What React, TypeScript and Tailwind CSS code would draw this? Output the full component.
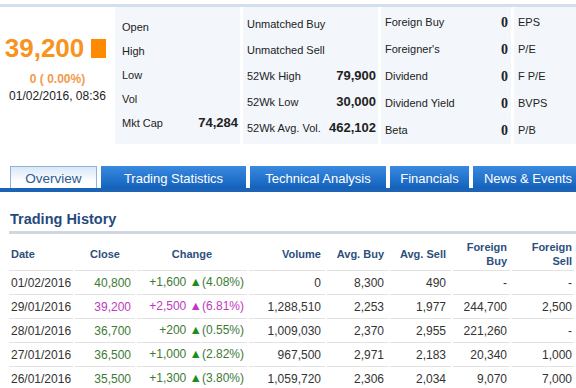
import React from 'react';

type Cell = { label: string; value?: string };

const col1: Cell[] = [
  { label: 'Open' },
  { label: 'High' },
  { label: 'Low' },
  { label: 'Vol' },
  { label: 'Mkt Cap', value: '74,284' },
];

const col2: Cell[] = [
  { label: 'Unmatched Buy' },
  { label: 'Unmatched Sell' },
  { label: '52Wk High', value: '79,900' },
  { label: '52Wk Low', value: '30,000' },
  { label: '52Wk Avg. Vol.', value: '462,102' },
];

const col3: Cell[] = [
  { label: 'Foreign Buy', value: '0' },
  { label: "Foreigner's", value: '0' },
  { label: 'Dividend', value: '0' },
  { label: 'Dividend Yield', value: '0' },
  { label: 'Beta', value: '0' },
];

const col4 = ['EPS', 'P/E', 'F P/E', 'BVPS', 'P/B'];

type Row = {
  date: string;
  close: string;
  change: string;
  pct: string;
  volume: string;
  avgBuy: string;
  avgSell: string;
  fBuy: string;
  fSell: string;
  hot?: boolean;
};

const rows: Row[] = [
  { date: '01/02/2016', close: '40,800', change: '+1,600', pct: '(4.08%)', volume: '0', avgBuy: '8,300', avgSell: '490', fBuy: '-', fSell: '-' },
  { date: '29/01/2016', close: '39,200', change: '+2,500', pct: '(6.81%)', volume: '1,288,510', avgBuy: '2,253', avgSell: '1,977', fBuy: '244,700', fSell: '2,500', hot: true },
  { date: '28/01/2016', close: '36,700', change: '+200', pct: '(0.55%)', volume: '1,009,030', avgBuy: '2,370', avgSell: '2,955', fBuy: '221,260', fSell: '-' },
  { date: '27/01/2016', close: '36,500', change: '+1,000', pct: '(2.82%)', volume: '967,500', avgBuy: '2,971', avgSell: '2,183', fBuy: '20,340', fSell: '1,000' },
  { date: '26/01/2016', close: '35,500', change: '+1,300', pct: '(3.80%)', volume: '1,059,720', avgBuy: '2,306', avgSell: '2,034', fBuy: '9,070', fSell: '7,000' },
];

const tabs = [
  { name: 'Trading Statistics', w: 'w-[145px]' },
  { name: 'Technical Analysis', w: 'w-[136px]' },
  { name: 'Financials', w: 'w-[79px]' },
  { name: 'News & Events', w: 'w-[110px]' },
];

export default function App() {
  return (
    <div className="w-[576px] h-[388px] overflow-hidden bg-white font-['Liberation_Sans',Arial,sans-serif] text-[#222]">
      <div className="mt-[4px] h-[3px] bg-[#d3dfeb]" />

      {/* quote summary */}
      <div className="flex h-[137px]">
        <div className="w-[115px] flex flex-col items-center">
          <div className="mt-[28px] flex items-center gap-[7px] pr-[4px]">
            <span className="text-[26px] font-bold leading-[26px] text-[#f7931e]">39,200</span>
            <span className="w-[15px] h-[19px] bg-[#ff8a00]" />
          </div>
          <div className="mt-[11px] text-[12px] font-bold leading-[14px] text-[#f39a4a]">0 ( 0.00%)</div>
          <div className="mt-[3px] text-[12px] leading-[14px] text-[#222]">01/02/2016, 08:36</div>
        </div>

        <div className="flex-1 flex gap-[3px]">
          <div className="w-[125px] bg-[#f3f7fb] pt-[8px] pl-[7px] pr-[2px]">
            {col1.map((c) => (
              <div key={c.label} className="h-[24px] flex items-center justify-between">
                <span className="text-[11px]">{c.label}</span>
                {c.value && <span className="text-[13px] font-bold">{c.value}</span>}
              </div>
            ))}
          </div>
          <div className="w-[135px] bg-[#f3f7fb] pt-[4px] pl-[4px] pr-[2px]">
            {col2.map((c) => (
              <div key={c.label} className="h-[26px] flex items-center justify-between">
                <span className="text-[11px]">{c.label}</span>
                {c.value && <span className="text-[13px] font-bold">{c.value}</span>}
              </div>
            ))}
          </div>
          <div className="w-[130px] bg-[#f3f7fb] pt-[2px] pl-[4px] pr-[3px]">
            {col3.map((c) => (
              <div key={c.label} className="h-[27px] flex items-center justify-between">
                <span className="text-[11px]">{c.label}</span>
                <span className="text-[14px] font-bold font-['Liberation_Serif',serif]">{c.value}</span>
              </div>
            ))}
          </div>
          <div className="flex-1 bg-[#f3f7fb] pt-[2px] pl-[4px]">
            {col4.map((l) => (
              <div key={l} className="h-[27px] flex items-center">
                <span className="text-[11px]">{l}</span>
              </div>
            ))}
          </div>
        </div>
      </div>

      {/* tabs */}
      <div className="mt-[22px] h-[26px] flex items-end gap-[4px] pl-[10px] border-b-[4px] border-[#1c63b6] overflow-hidden">
        <div className="w-[87px] h-[26px] -mb-[4px] shrink-0 border border-b-0 border-[#8db3dd] bg-gradient-to-b from-[#d9e8f7] to-white to-60% flex items-center justify-center">
          <span className="text-[13.5px] text-[#2b5b90] pb-[1px]">Overview</span>
        </div>
        {tabs.map((t) => (
          <div
            key={t.name}
            className={`${t.w} h-[22px] shrink-0 bg-gradient-to-b from-[#3a8ae0] to-[#1262bd] flex items-center justify-center`}
          >
            <span className="text-[13px] text-white pt-[4px]">{t.name}</span>
          </div>
        ))}
      </div>

      {/* trading history */}
      <div className="pt-[18px] pl-[10px]">
        <h2 className="text-[14.5px] leading-[18px] font-bold text-[#1f4b80]">Trading History</h2>
      </div>
      <div className="mt-[3px] ml-[9px] h-[3px] bg-[#cfd8e1]" />

      <table className="ml-[7px] w-[569px] table-fixed border-separate border-spacing-x-[2px] border-spacing-y-0 text-[12px]">
        <colgroup>
          <col className="w-[64px]" />
          <col className="w-[60px]" />
          <col className="w-[110px]" />
          <col className="w-[76px]" />
          <col className="w-[61px]" />
          <col className="w-[61px]" />
          <col className="w-[57px]" />
          <col className="w-[62px]" />
        </colgroup>
        <thead>
          <tr className="h-[37px] text-[11px] font-bold text-[#2d4f7c] leading-[14px]">
            <th className="text-left pl-[2px] pt-[4px] font-bold border-b border-[#e2e2e2]">Date</th>
            <th className="text-center pt-[4px] font-bold border-b border-[#e2e2e2]">Close</th>
            <th className="text-center pt-[4px] font-bold border-b border-[#e2e2e2]">Change</th>
            <th className="text-right pr-[4px] pt-[4px] font-bold border-b border-[#e2e2e2]">Volume</th>
            <th className="text-right pr-[4px] pt-[4px] font-bold border-b border-[#e2e2e2]">Avg. Buy</th>
            <th className="text-right pr-[5px] pt-[4px] font-bold border-b border-[#e2e2e2]">Avg. Sell</th>
            <th className="text-right pr-[3px] pt-[4px] font-bold border-b border-[#e2e2e2]">Foreign<br />Buy</th>
            <th className="text-right pr-[2px] pt-[4px] font-bold border-b border-[#e2e2e2]">Foreign<br />Sell</th>
          </tr>
        </thead>
        <tbody>
          {rows.map((r) => {
            const tone = r.hot ? 'text-[#c038c0]' : 'text-[#3d7a34]';
            const tri = r.hot ? 'text-[#c038c0]' : 'text-[#1a8f1a]';
            return (
              <tr key={r.date} className="h-[24px] text-[#333]">
                <td className="pl-[2px] border-b border-[#e2e2e2]">{r.date}</td>
                <td className={`text-right pr-[4px] border-b border-[#e2e2e2] ${tone}`}>{r.close}</td>
                <td className={`text-right pr-[3px] border-b border-[#e2e2e2] ${tone}`}>
                  {r.change} <span className={`${tri} text-[12.5px]`}>▲</span>{r.pct}
                </td>
                <td className="text-right pr-[4px] border-b border-[#e2e2e2]">{r.volume}</td>
                <td className="text-right pr-[4px] border-b border-[#e2e2e2]">{r.avgBuy}</td>
                <td className="text-right pr-[5px] border-b border-[#e2e2e2]">{r.avgSell}</td>
                <td className="text-right pr-[3px] border-b border-[#e2e2e2]">{r.fBuy}</td>
                <td className="text-right pr-[2px] border-b border-[#e2e2e2]">{r.fSell}</td>
              </tr>
            );
          })}
        </tbody>
      </table>
    </div>
  );
}
